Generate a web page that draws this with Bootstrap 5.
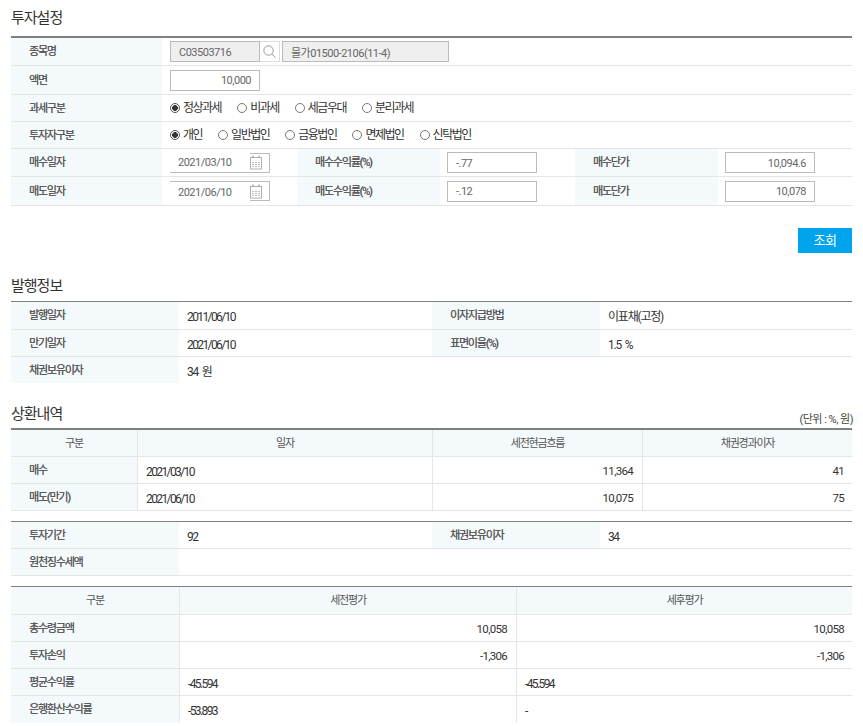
<!DOCTYPE html>
<html lang="ko">
<head>
<meta charset="utf-8">
<title>투자설정</title>
<link href="https://cdn.jsdelivr.net/npm/bootstrap@5.3.0/dist/css/bootstrap.min.css" rel="stylesheet">
<style>
body{font-family:Roboto,"Noto Sans CJK KR",sans-serif;font-size:11px;color:#333;background:#fff}
.page-wrap{padding:0 11px}
.sec-title{font-size:15px;letter-spacing:-1px;color:#333;line-height:20px;margin:0;font-weight:400}
.head-a{height:36px;padding-top:8px}
.head-b{height:48px;padding-top:23px}
.head-c{height:45px;padding-top:21px}
.unit-note{font-size:11px;letter-spacing:-.5px;color:#444;margin-right:-1px;line-height:12px;padding-top:10px}
.dt{table-layout:fixed;border-collapse:separate;border-spacing:0;width:841px;margin:0;border-top:1px solid #808080;font-size:12px;color:#333}
.dt.thick{border-top-width:2px}
.dt>tbody>tr>*,.dt>thead>tr>*{padding:3px 7px 0 8px;border-bottom:1px solid #e6e6e6;vertical-align:middle;font-weight:400;background:transparent;box-shadow:none;color:#333;letter-spacing:-1.6px;word-spacing:2px}
.dt>tbody>tr>th,.dt>thead>tr>th{background:#f4f9fc;color:#555;font-size:11px;padding-left:18px;padding-top:2px;letter-spacing:-1.2px;word-spacing:1px;text-shadow:.2px 0 0 #777}
.dt>thead>tr>th{text-align:center;padding-left:0;padding-right:0;text-shadow:none;color:#555}
.dt>tbody>tr>.num{text-align:right;font-size:11.5px;letter-spacing:-.7px;padding-right:8px}
.dt>tbody>tr>.num.vline{padding-right:9px}
.dt>tbody>tr>.vline,.dt>thead>tr>.vline{border-right:1px solid #e6e6e6}
.dt>tbody>tr.noline>*{border-bottom:0}
.dt>tbody>tr>.ctl{padding-top:0}
.dt>tbody>tr>.ctl.tight{padding-left:7px}
.dt>tbody>tr>.ko{letter-spacing:-1.2px}
.h26{height:26px}.h27{height:27px}.h28{height:28px}.h29{height:29px}
.c127{width:127px}.c134{width:134px}.c135{width:135px}.c143{width:143px}.c151{width:151px}.c168{width:168px}.c169{width:169px}.c209{width:209px}.c210{width:210px}.c252{width:252px}.c253{width:253px}.c295{width:295px}.c335{width:335px}.c337{width:337px}
.field{width:90px;height:21px;padding:1px 8px 0;border:1px solid #bbb;border-radius:0;font-size:11px;letter-spacing:-.5px;word-spacing:0;color:#666;background:#fff;font-family:inherit;min-height:0;line-height:18px}
.field.ro{background:#efefef;color:#666}
.field.wide{width:167px;padding-left:8px}
.field.rt{text-align:right}
.field:focus{box-shadow:none;border-color:#bbb;color:#666}
.srch{width:20px;height:21px;border:1px solid #ddd;border-left:0;background:#fff;padding:0;margin-right:2px;border-radius:0;line-height:0}
.date-in{width:100px;height:20px}
.date-in .field{width:80px;height:20px;border-width:0;padding-left:8px;background:transparent}
.date-in.bot .field{border-bottom-width:1px}
.date-in.top .field{border-top-width:1px}
.cal{width:20px;height:20px;border:1px solid #bbb;border-left:0;background:#fff;padding:0;border-radius:0;line-height:0;text-align:left}
.opt{margin:0;padding:0;min-height:0;gap:3px;font-size:12px;letter-spacing:-1.5px;color:#333;line-height:16px}
.opt .form-check-input{float:none;margin:0;width:10px;height:10px;border:1px solid #777;background:#fff;box-shadow:none;flex:none}
.opt .form-check-input:checked{background:radial-gradient(circle,#333 0,#333 2.6px,#fff 3.1px);border-color:#555}
.opts-a,.opts-b{gap:16px}
.query-row{padding-top:22px}
.query-btn{width:54px;height:25px;padding:0;border:0;border-radius:0;background:#00a4ec;color:#fff;font-size:13px;letter-spacing:-.5px;line-height:25px}
.query-btn:hover{background:#00a4ec;color:#fff}
.gap10{height:10px}
</style>
</head>
<body>
<main class="page-wrap">
  <div class="head-a"><h2 class="sec-title">투자설정</h2></div>
  <table class="table dt thick">
    <colgroup><col class="c151"><col class="c135"><col class="c143"><col class="c135"><col class="c143"><col class="c134"></colgroup>
    <tbody>
      <tr class="h28"><th>종목명</th><td colspan="5" class="ctl"><div class="d-flex align-items-center">
        <input class="form-control field ro" value="C03503716" readonly>
        <button class="btn srch" type="button" aria-label="검색"><svg width="15" height="15" viewBox="0 0 15 15" fill="none" stroke="#9a9a9a" stroke-width="1"><circle cx="6.5" cy="6.5" r="4.7"/><path d="M10 10l3.6 3.6"/></svg></button>
        <input class="form-control field ro wide" value="물가01500-2106(11-4)" readonly>
      </div></td></tr>
      <tr class="h29"><th>액면</th><td colspan="5" class="ctl"><input class="form-control field rt" value="10,000"></td></tr>
      <tr class="h27"><th>과세구분</th><td colspan="5" class="ctl"><div class="d-flex opts-a">
        <label class="form-check opt d-flex align-items-center"><input class="form-check-input" type="radio" name="tax" checked>정상과세</label>
        <label class="form-check opt d-flex align-items-center"><input class="form-check-input" type="radio" name="tax">비과세</label>
        <label class="form-check opt d-flex align-items-center"><input class="form-check-input" type="radio" name="tax">세금우대</label>
        <label class="form-check opt d-flex align-items-center"><input class="form-check-input" type="radio" name="tax">분리과세</label>
      </div></td></tr>
      <tr class="h27"><th>투자자구분</th><td colspan="5" class="ctl"><div class="d-flex opts-b">
        <label class="form-check opt d-flex align-items-center"><input class="form-check-input" type="radio" name="inv" checked>개인</label>
        <label class="form-check opt d-flex align-items-center"><input class="form-check-input" type="radio" name="inv">일반법인</label>
        <label class="form-check opt d-flex align-items-center"><input class="form-check-input" type="radio" name="inv">금융법인</label>
        <label class="form-check opt d-flex align-items-center"><input class="form-check-input" type="radio" name="inv">면제법인</label>
        <label class="form-check opt d-flex align-items-center"><input class="form-check-input" type="radio" name="inv">신탁법인</label>
      </div></td></tr>
      <tr class="h28"><th>매수일자</th><td class="ctl"><div class="d-flex date-in bot">
        <input class="form-control field" value="2021/03/10">
        <button class="btn cal" type="button" aria-label="달력"><svg width="12" height="15" viewBox="0 0 12 15" fill="none" stroke="#b0b0b0"><rect x=".5" y="2.5" width="11" height="11.5"/><path d="M3 .5v2.5M9 .5v2.5" stroke="#999"/><path d="M2.5 7.5h1M5.5 7.5h1M8.5 7.5h1M2.5 9.5h1M5.5 9.5h1M8.5 9.5h1M2.5 11.5h1M5.5 11.5h1M8.5 11.5h1" stroke="#777"/></svg></button>
      </div></td><th>매수수익률(%)</th><td class="ctl tight"><input class="form-control field" value="-.77"></td><th>매수단가</th><td class="ctl tight"><input class="form-control field rt" value="10,094.6"></td></tr>
      <tr class="h29"><th>매도일자</th><td class="ctl"><div class="d-flex date-in top">
        <input class="form-control field" value="2021/06/10">
        <button class="btn cal" type="button" aria-label="달력"><svg width="12" height="15" viewBox="0 0 12 15" fill="none" stroke="#b0b0b0"><rect x=".5" y="2.5" width="11" height="11.5"/><path d="M3 .5v2.5M9 .5v2.5" stroke="#999"/><path d="M2.5 7.5h1M5.5 7.5h1M8.5 7.5h1M2.5 9.5h1M5.5 9.5h1M8.5 9.5h1M2.5 11.5h1M5.5 11.5h1M8.5 11.5h1" stroke="#777"/></svg></button>
      </div></td><th>매도수익률(%)</th><td class="ctl tight"><input class="form-control field" value="-.12"></td><th>매도단가</th><td class="ctl tight"><input class="form-control field rt" value="10,078"></td></tr>
    </tbody>
  </table>
  <div class="query-row d-flex justify-content-end"><button class="btn query-btn" type="button">조회</button></div>

  <div class="head-b"><h2 class="sec-title">발행정보</h2></div>
  <table class="table dt">
    <colgroup><col class="c168"><col class="c253"><col class="c168"><col class="c252"></colgroup>
    <tbody>
      <tr class="h28"><th>발행일자</th><td>2011/06/10</td><th>이자지급방법</th><td class="ko">이표채(고정)</td></tr>
      <tr class="h27"><th>만기일자</th><td>2021/06/10</td><th>표면이율(%)</th><td class="ko">1.5 %</td></tr>
      <tr class="h26 noline"><th>채권보유이자</th><td colspan="3" class="ko">34 원</td></tr>
    </tbody>
  </table>

  <div class="head-c d-flex justify-content-between"><h2 class="sec-title">상환내역</h2><span class="unit-note">(단위 : %, 원)</span></div>
  <table class="table dt thick">
    <colgroup><col class="c127"><col class="c295"><col class="c210"><col class="c209"></colgroup>
    <thead><tr class="h27"><th class="vline">구분</th><th class="vline">일자</th><th class="vline">세전현금흐름</th><th>채권경과이자</th></tr></thead>
    <tbody>
      <tr class="h27"><th class="vline">매수</th><td class="vline">2021/03/10</td><td class="num vline">11,364</td><td class="num">41</td></tr>
      <tr class="h27"><th class="vline">매도(만기)</th><td class="vline">2021/06/10</td><td class="num vline">10,075</td><td class="num">75</td></tr>
    </tbody>
  </table>
  <div class="gap10"></div>
  <table class="table dt">
    <colgroup><col class="c168"><col class="c253"><col class="c168"><col class="c252"></colgroup>
    <tbody>
      <tr class="h27"><th>투자기간</th><td>92</td><th>채권보유이자</th><td>34</td></tr>
      <tr class="h27"><th>원천징수세액</th><td colspan="3"></td></tr>
    </tbody>
  </table>
  <div class="gap10"></div>
  <table class="table dt">
    <colgroup><col class="c169"><col class="c337"><col class="c335"></colgroup>
    <thead><tr class="h28"><th class="vline">구분</th><th class="vline">세전평가</th><th>세후평가</th></tr></thead>
    <tbody>
      <tr class="h27"><th class="vline">총수령금액</th><td class="num vline">10,058</td><td class="num">10,058</td></tr>
      <tr class="h27"><th class="vline">투자손익</th><td class="num vline">-1,306</td><td class="num">-1,306</td></tr>
      <tr class="h27"><th class="vline">평균수익률</th><td class="vline">-45.594</td><td>-45.594</td></tr>
      <tr class="h27 noline"><th class="vline">은행환산수익률</th><td class="vline">-53.893</td><td>-</td></tr>
    </tbody>
  </table>
</main>
<script src="https://cdn.jsdelivr.net/npm/bootstrap@5.3.0/dist/js/bootstrap.bundle.min.js"></script>
</body>
</html>
